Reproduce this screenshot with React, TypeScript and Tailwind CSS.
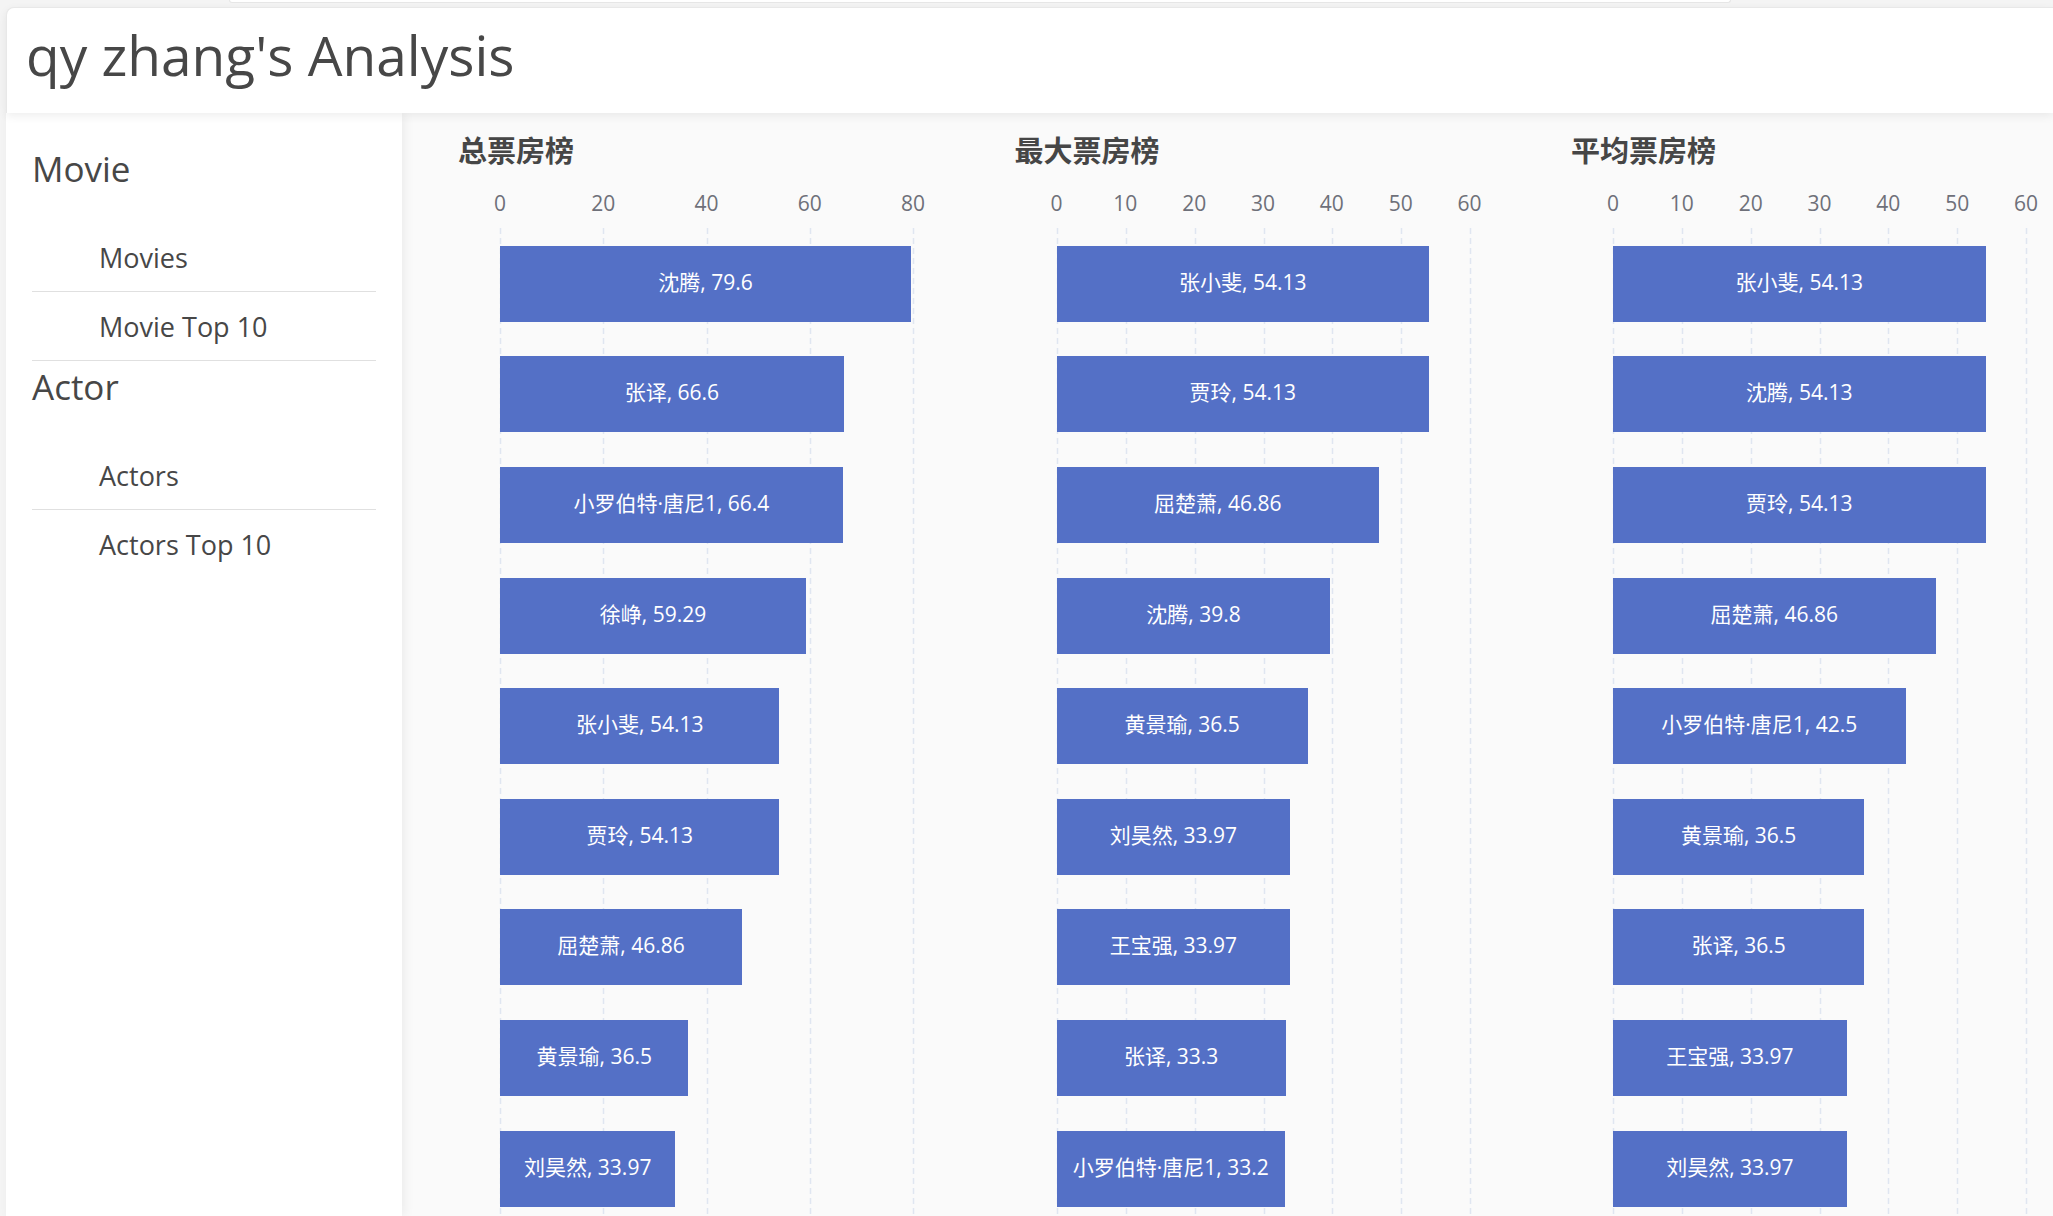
import React from 'react';

type Row = { name: string; value: number };

// only the first 9 rows fit in the viewport; the 10th band is below the fold
const TOTAL: Row[] = [
  { name: '沈腾', value: 79.6 },
  { name: '张译', value: 66.6 },
  { name: '小罗伯特·唐尼1', value: 66.4 },
  { name: '徐峥', value: 59.29 },
  { name: '张小斐', value: 54.13 },
  { name: '贾玲', value: 54.13 },
  { name: '屈楚萧', value: 46.86 },
  { name: '黄景瑜', value: 36.5 },
  { name: '刘昊然', value: 33.97 },
];

const MAX: Row[] = [
  { name: '张小斐', value: 54.13 },
  { name: '贾玲', value: 54.13 },
  { name: '屈楚萧', value: 46.86 },
  { name: '沈腾', value: 39.8 },
  { name: '黄景瑜', value: 36.5 },
  { name: '刘昊然', value: 33.97 },
  { name: '王宝强', value: 33.97 },
  { name: '张译', value: 33.3 },
  { name: '小罗伯特·唐尼1', value: 33.2 },
];

const AVG: Row[] = [
  { name: '张小斐', value: 54.13 },
  { name: '沈腾', value: 54.13 },
  { name: '贾玲', value: 54.13 },
  { name: '屈楚萧', value: 46.86 },
  { name: '小罗伯特·唐尼1', value: 42.5 },
  { name: '黄景瑜', value: 36.5 },
  { name: '张译', value: 36.5 },
  { name: '王宝强', value: 33.97 },
  { name: '刘昊然', value: 33.97 },
];

const GRID_W = 413;
const BAND = 110.6;
const BANDS = 10;

const NAV = [
  { title: 'Movie', items: ['Movies', 'Movie Top 10'] },
  { title: 'Actor', items: ['Actors', 'Actors Top 10'] },
];

function BarChart({ title, rows, max, step }: { title: string; rows: Row[]; max: number; step: number }) {
  const ticks: number[] = [];
  for (let t = 0; t <= max; t += step) ticks.push(t);
  const gridH = BANDS * BAND;

  return (
    <div className="w-[556.5px] shrink-0">
      <h2 className="pl-[9px] pt-[22px] font-['Noto_Sans_CJK_SC',sans-serif] text-[29px] font-bold leading-none text-[#464646]">{title}</h2>

      {/* x axis labels */}
      <div className="relative ml-[51px] mt-[29px] h-[21px] w-[413px] text-[21px] leading-none text-[#6e7079]">
        {ticks.map((t) => (
          <span key={t} className="absolute top-0 -translate-x-1/2" style={{ left: (t / max) * GRID_W }}>
            {t}
          </span>
        ))}
      </div>

      <div className="relative ml-[51px] mt-[14px] w-[413px]" style={{ height: gridH }}>
        <svg className="absolute left-0 top-0 overflow-visible" width={GRID_W + 2} height={gridH}>
          {ticks.map((t) => {
            const x = Math.round((t / max) * GRID_W) + 0.5;
            return <line key={t} x1={x} x2={x} y1={0} y2={gridH} stroke="#e0e6f1" strokeWidth={1.5} strokeDasharray="6 4" />;
          })}
        </svg>
        <div className="relative flex flex-col">
          {rows.map((r, i) => (
            <div key={i} className="flex h-[110.6px] items-center">
              <div
                className="mt-[1px] flex h-[76px] items-center justify-center whitespace-nowrap bg-[#5470c6] pb-[3px] text-[21px] leading-none text-white"
                style={{ width: (r.value / max) * GRID_W }}
              >
                {r.name}, {r.value}
              </div>
            </div>
          ))}
        </div>
      </div>
    </div>
  );
}

export default function App() {
  return (
    <div className="h-screen overflow-hidden bg-[#f4f4f4] pl-[6px] font-['Open_Sans','Noto_Sans_CJK_SC',sans-serif] text-[#474747]">
      <div className="ml-[223px] h-[3px] w-[1502px] rounded-b-lg border-x border-b border-[#e6e6e6] bg-white" />

      <header className="relative z-20 mt-[4px] h-[106px] rounded-tl-[8px] border-l border-t border-[#e8e8e8] bg-white pl-[19px] pt-[19px] shadow-[0_3px_10px_rgba(0,0,0,0.07)]">
        <h1 className="text-[55px] leading-none text-[#474747]">qy zhang's Analysis</h1>
      </header>

      <div className="flex h-[1103px]">
        <aside className="relative z-10 w-[396px] shrink-0 bg-white px-[26px] pt-[30px] shadow-[3px_0_10px_rgba(0,0,0,0.06)]">
          {NAV.map((g, gi) => (
            <div key={g.title}>
              <div className="h-[80px] pt-[8px] text-[35px] leading-none">{g.title}</div>
              {g.items.map((it, ii) => {
                const last = gi === NAV.length - 1 && ii === g.items.length - 1;
                return (
                  <div
                    key={it}
                    className={`flex h-[69px] items-center pl-[67px] text-[27px] leading-none ${last ? '' : 'border-b border-[#e0e0e0]'}`}
                  >
                    {it}
                  </div>
                );
              })}
            </div>
          ))}
        </aside>

        <main className="flex flex-1 overflow-hidden bg-[#fafafa] pl-[47px]">
          <BarChart title="总票房榜" rows={TOTAL} max={80} step={20} />
          <BarChart title="最大票房榜" rows={MAX} max={60} step={10} />
          <BarChart title="平均票房榜" rows={AVG} max={60} step={10} />
        </main>
      </div>
    </div>
  );
}
